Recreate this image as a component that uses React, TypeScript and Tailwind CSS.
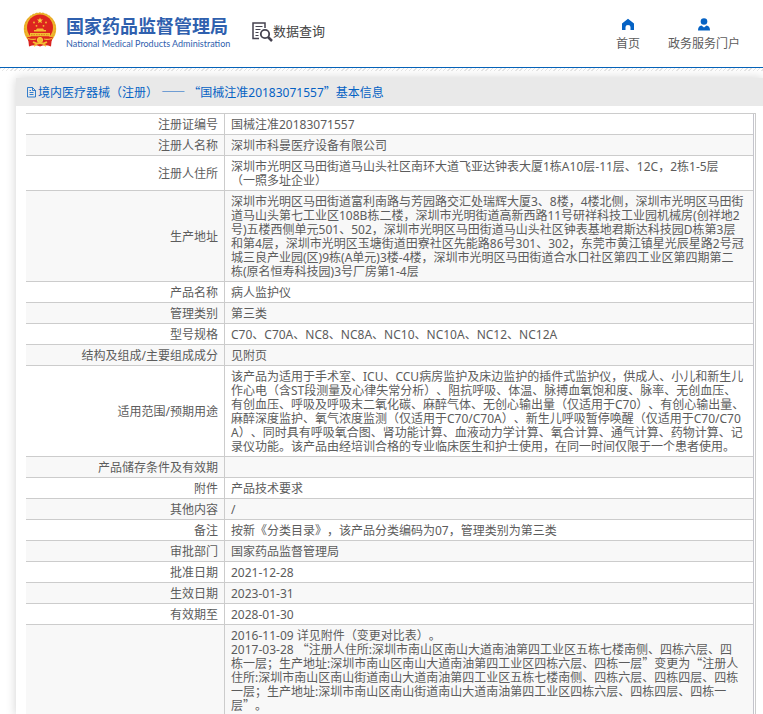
import React from "react";

type Row = { label: string; lines: string[] };

const rows: Row[] = [
  { label: "注册证编号", lines: ["国械注准20183071557"] },
  { label: "注册人名称", lines: ["深圳市科曼医疗设备有限公司"] },
  {
    label: "注册人住所",
    lines: [
      "深圳市光明区马田街道马山头社区南环大道飞亚达钟表大厦1栋A10层-11层、12C，2栋1-5层",
      "（一照多址企业）",
    ],
  },
  {
    label: "生产地址",
    lines: [
      "深圳市光明区马田街道富利南路与芳园路交汇处瑞辉大厦3、8楼，4楼北侧，深圳市光明区马田街",
      "道马山头第七工业区108B栋二楼，深圳市光明街道高新西路11号研祥科技工业园机械房(创祥地2",
      "号)五楼西侧单元501、502，深圳市光明区马田街道马山头社区钟表基地君斯达科技园D栋第3层",
      "和第4层，深圳市光明区玉塘街道田寮社区先能路86号301、302，东莞市黄江镇星光辰星路2号冠",
      "城三良产业园(区)9栋(A单元)3楼-4楼，深圳市光明区马田街道合水口社区第四工业区第四期第二",
      "栋(原名恒寿科技园)3号厂房第1-4层",
    ],
  },
  { label: "产品名称", lines: ["病人监护仪"] },
  { label: "管理类别", lines: ["第三类"] },
  { label: "型号规格", lines: ["C70、C70A、NC8、NC8A、NC10、NC10A、NC12、NC12A"] },
  { label: "结构及组成/主要组成成分", lines: ["见附页"] },
  {
    label: "适用范围/预期用途",
    lines: [
      "该产品为适用于手术室、ICU、CCU病房监护及床边监护的插件式监护仪，供成人、小儿和新生儿",
      "作心电（含ST段测量及心律失常分析）、阻抗呼吸、体温、脉搏血氧饱和度、脉率、无创血压、",
      "有创血压、呼吸及呼吸末二氧化碳、麻醉气体、无创心输出量（仅适用于C70）、有创心输出量、",
      "麻醉深度监护、氧气浓度监测（仅适用于C70/C70A）、新生儿呼吸暂停唤醒（仅适用于C70/C70",
      "A）、同时具有呼吸氧合图、肾功能计算、血液动力学计算、氧合计算、通气计算、药物计算、记",
      "录仪功能。该产品由经培训合格的专业临床医生和护士使用，在同一时间仅限于一个患者使用。",
    ],
  },
  { label: "产品储存条件及有效期", lines: [""] },
  { label: "附件", lines: ["产品技术要求"] },
  { label: "其他内容", lines: ["/"] },
  { label: "备注", lines: ["按新《分类目录》，该产品分类编码为07，管理类别为第三类"] },
  { label: "审批部门", lines: ["国家药品监督管理局"] },
  { label: "批准日期", lines: ["2021-12-28"] },
  { label: "生效日期", lines: ["2023-01-31"] },
  { label: "有效期至", lines: ["2028-01-30"] },
  {
    label: "",
    lines: [
      "2016-11-09 详见附件（变更对比表）。",
      "2017-03-28 “注册人住所:深圳市南山区南山大道南油第四工业区五栋七楼南侧、四栋六层、四",
      "栋一层；生产地址:深圳市南山区南山大道南油第四工业区四栋六层、四栋一层”变更为“注册人",
      "住所:深圳市南山区南山街道南山大道南油第四工业区五栋七楼南侧、四栋六层、四栋四层、四栋",
      "一层；生产地址:深圳市南山区南山街道南山大道南油第四工业区四栋六层、四栋四层、四栋一",
      "层”。",
      "",
    ],
  },
];

/* Curly quotes and dashes take the full-width glyphs of the Chinese face. */
function Text({ children }: { children: string }) {
  return (
    <>
      {children.split(/([“”—]+)/).map((part, i) =>
        i % 2 ? (
          <span key={i} className="font-['Noto_Sans_CJK_SC',sans-serif] leading-0">
            {part}
          </span>
        ) : (
          part
        ),
      )}
    </>
  );
}

function Emblem() {
  return (
    <svg viewBox="0 0 34 36" className="h-9 w-[34px] shrink-0" aria-hidden="true">
      <circle cx="17" cy="17" r="16.2" fill="#efb52b" />
      <path d="M5 25 L29 25 L28 34.500 Q22 32 17 34.500 Q12 32 6 34.500 Z" fill="#d92420" />
      <circle cx="17" cy="15.500" r="13" fill="#dd241f" />
      <circle cx="17" cy="16" r="15.200" fill="none" stroke="#d99a20" strokeWidth="0.700" strokeDasharray="2 1.500" />
      <path d="M17 5.500l.8 2 2.200.1-1.700 1.400.6 2.200-1.900-1.200-1.900 1.200.6-2.200-1.700-1.400 2.200-.1z" fill="#f8d03c" />
      <g fill="#f4bd32">
        <circle cx="11" cy="10.500" r="0.900" />
        <circle cx="23" cy="10.500" r="0.900" />
        <circle cx="13.500" cy="13.800" r="0.900" />
        <circle cx="20.500" cy="13.800" r="0.900" />
        <path d="M11 19.500h12v-1.500h-2l-1-1.500h-6l-1 1.500h-2zM7 21h20v3.200H7z" />
      </g>
      <path d="M8 22.700h18" stroke="#c8641d" strokeWidth="0.700" strokeDasharray="1.500 1" />
      <path d="M4 25q6 3 9.500 1 3.500-3 7 0 3.500 2 9.500-1l-1.500 4q-5 2-8-.5-3.500 3-7 0-3 2.500-8 .5z" fill="#dd241f" />
      <path d="M5 26.500q5 1.500 8 .5M29 26.500q-5 1.500-8 .5" stroke="#f4bd32" strokeWidth="1.200" fill="none" />
      <circle cx="17" cy="28" r="2.600" fill="#f4bd32" stroke="#f8d03c" />
      <path d="M10 30q4 2.500 7 1 3 1.500 7-1M11 34l4-3M23 34l-4-3" fill="none" stroke="#f4bd32" strokeWidth="1.600" />
    </svg>
  );
}

function QueryIcon() {
  return (
    <svg viewBox="0 0 21 20" className="h-5 w-[21px]" fill="none" stroke="#45424f" aria-hidden="true">
      <path d="M7 16.500H1V1h12v5" strokeWidth="1.500" />
      <path d="M3.500 4.500h7M3.500 7.500h5M3.500 10.500h3M3.500 13.500h3" strokeWidth="1.200" />
      <circle cx="13" cy="12" r="4.200" strokeWidth="1.800" />
      <path d="M16 15l4 4" strokeWidth="2.500" />
    </svg>
  );
}

function FileIcon() {
  return (
    <svg viewBox="0 0 12 12" className="size-3" fill="none" stroke="#0562c4" aria-hidden="true">
      <path d="M1.500 1.500h5l3 3v6.500h-8zM6.500 1.500v3h3M3.500 6.500h4M3.500 8.500h4M3.500 4.500h1.500" strokeWidth="0.800" />
    </svg>
  );
}

export default function App() {
  return (
    <div
      lang="zh-CN"
      className="h-screen overflow-hidden bg-white font-['Noto_Sans','Noto_Sans_CJK_SC',sans-serif] text-xs leading-[14px] text-[#5c5c5c] [text-spacing-trim:space-all]"
    >
      <header className="flex h-[68px] justify-between border-b border-[#0562b8] pr-[23px] pl-[23px]">
        <div className="flex pt-3">
          <a href="#home" className="flex h-9 gap-[9px]">
            <Emblem />
            <span className="flex w-[162px] flex-col pt-[2px] text-[#2f60ae]">
              <span className="font-['Noto_Sans_CJK_SC',sans-serif] text-[18px] leading-[22px] font-bold whitespace-nowrap">
                国家药品监督管理局
              </span>
              <span className="font-['Lato',sans-serif] text-[9px] leading-4 whitespace-nowrap">
                National Medical Products Administration
              </span>
            </span>
          </a>
          <a href="#search" className="ml-6 flex h-9 items-center text-[13px] text-[#444]">
            <span className="pt-1">
              <QueryIcon />
            </span>
            <span className="pt-px whitespace-nowrap">数据查询</span>
          </a>
        </div>
        <nav className="flex gap-7 pt-[17px]">
          <a href="#index" className="flex flex-col items-center gap-1">
            <svg viewBox="0 0 14 14" className="size-[14px]" fill="#0562c4" aria-hidden="true">
              <path d="M7 1.800L13 6.500V13H9.500V10q0-2-2.500-2T4.500 10v3H1V6.500z" />
            </svg>
            <span className="pt-[2px]">首页</span>
          </a>
          <a href="#portal" className="flex flex-col items-center gap-1">
            <svg viewBox="0 0 14 14" className="size-[14px]" fill="#0562c4" aria-hidden="true">
              <circle cx="7" cy="4.500" r="3.300" />
              <path d="M1 13.500q0-4.500 3.500-5L7 10.500l2.500-2q3.500.5 3.500 5z" />
            </svg>
            <span className="pt-[2px]">政务服务门户</span>
          </a>
        </nav>
      </header>
      <div className="h-[10px] bg-[repeating-linear-gradient(135deg,#e6e6e6_0px,#e6e6e6_1px,transparent_1px,transparent_3px)] bg-[length:100%_3px] bg-no-repeat" />
      <main className="ml-4 bg-white shadow-[0_0_10px_rgba(0,0,0,0.18)]">
        <h1 className="flex h-7 items-center bg-[#e9e9e9] pl-[10px] text-[#0562c4]">
          <FileIcon />
          <span className="pt-px whitespace-pre">
            <Text>境内医疗器械（注册） —— “国械注准20183071557”基本信息</Text>
          </span>
        </h1>
        <div className="pt-[7px] pr-[7px] pl-[10px]">
          <div className="border-t border-r border-[#ccc] pr-px">
            <table className="w-full table-fixed border-separate border-spacing-0 border-r border-[#c4c4cc]">
              <colgroup>
                <col className="w-[199px]" />
                <col />
              </colgroup>
              <tbody>
                {rows.map((row, i) => (
                  <tr key={i} className="even:bg-[#f8f8f8]">
                    <th
                      scope="row"
                      className="h-[21px] border-r border-b border-[#ccc] px-[6px] pt-1 pb-[2px] text-right font-normal whitespace-nowrap"
                    >
                      {row.label}
                    </th>
                    <td className="h-[21px] border-b border-[#ccc] px-[6px] pt-1 pb-[2px] whitespace-nowrap">
                      {row.lines.map((line, j) => (
                        <React.Fragment key={j}>
                          {j > 0 && <br />}
                          <Text>{line}</Text>
                        </React.Fragment>
                      ))}
                    </td>
                  </tr>
                ))}
              </tbody>
            </table>
          </div>
        </div>
      </main>
    </div>
  );
}
